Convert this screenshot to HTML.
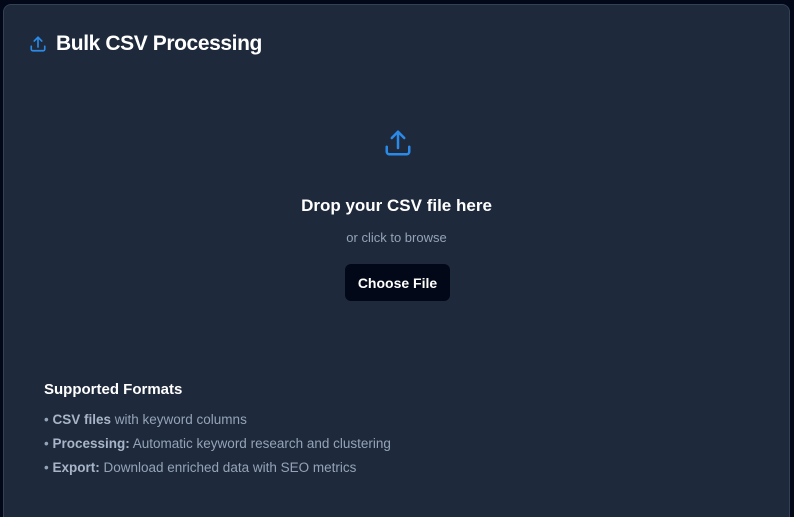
<!DOCTYPE html>
<html><head><style>
html,body{margin:0;padding:0;width:794px;height:517px;background:#020817;overflow:hidden;font-family:"Liberation Sans",sans-serif}
.card{position:absolute;left:3px;top:4px;width:787px;height:513px;background:#1e293b;border:1px solid #334155;border-bottom:none;border-radius:8px 8px 0 0;box-sizing:border-box;overflow:hidden}
.title{position:absolute;left:25px;top:27px;display:flex;align-items:center;color:#fff;font-size:21px;font-weight:bold;letter-spacing:-0.4px}
.title svg{margin-right:9px}
.c{position:absolute;left:0;width:100%;text-align:center}
.btn{position:absolute;left:341px;top:259px;width:105px;height:37px;background:#020817;border-radius:6px;color:#fff;font-size:14px;font-weight:bold;display:flex;align-items:center;justify-content:center}
.sf{position:absolute;left:40px;top:376px;color:#fff;font-size:15px;font-weight:bold}
.li{position:absolute;left:40px;color:#94a3b8;font-size:13.5px}
.li b{color:#a8b5c8}
</style></head><body>
<div class="card">
<div class="title"><svg width="18" height="18" viewBox="0 0 24 24" fill="none" stroke="#2b8ae8" stroke-width="2.2" stroke-linecap="round" stroke-linejoin="round"><path d="M3 15v4a2 2 0 0 0 2 2h14a2 2 0 0 0 2-2v-4"/><path d="M7 8l5-5 5 5"/><path d="M12 3v13"/></svg>Bulk CSV Processing</div>
<svg style="position:absolute;left:379px;top:123px" width="30" height="30" viewBox="0 0 24 24" fill="none" stroke="#2b8ae8" stroke-width="2" stroke-linecap="round" stroke-linejoin="round"><path d="M3 15v4a2 2 0 0 0 2 2h14a2 2 0 0 0 2-2v-4"/><path d="M7 8l5-5 5 5"/><path d="M12 3v13"/></svg>
<div class="c" style="top:191px;color:#fff;font-size:17px;font-weight:bold">Drop your CSV file here</div>
<div class="c" style="top:225px;color:#94a3b8;font-size:13px">or click to browse</div>
<div class="btn">Choose File</div>
<div class="sf">Supported Formats</div>
<div class="li" style="top:407px">• <b>CSV files</b> with keyword columns</div>
<div class="li" style="top:431px">• <b>Processing:</b> Automatic keyword research and clustering</div>
<div class="li" style="top:455px">• <b>Export:</b> Download enriched data with SEO metrics</div>
</div>
</body></html>
